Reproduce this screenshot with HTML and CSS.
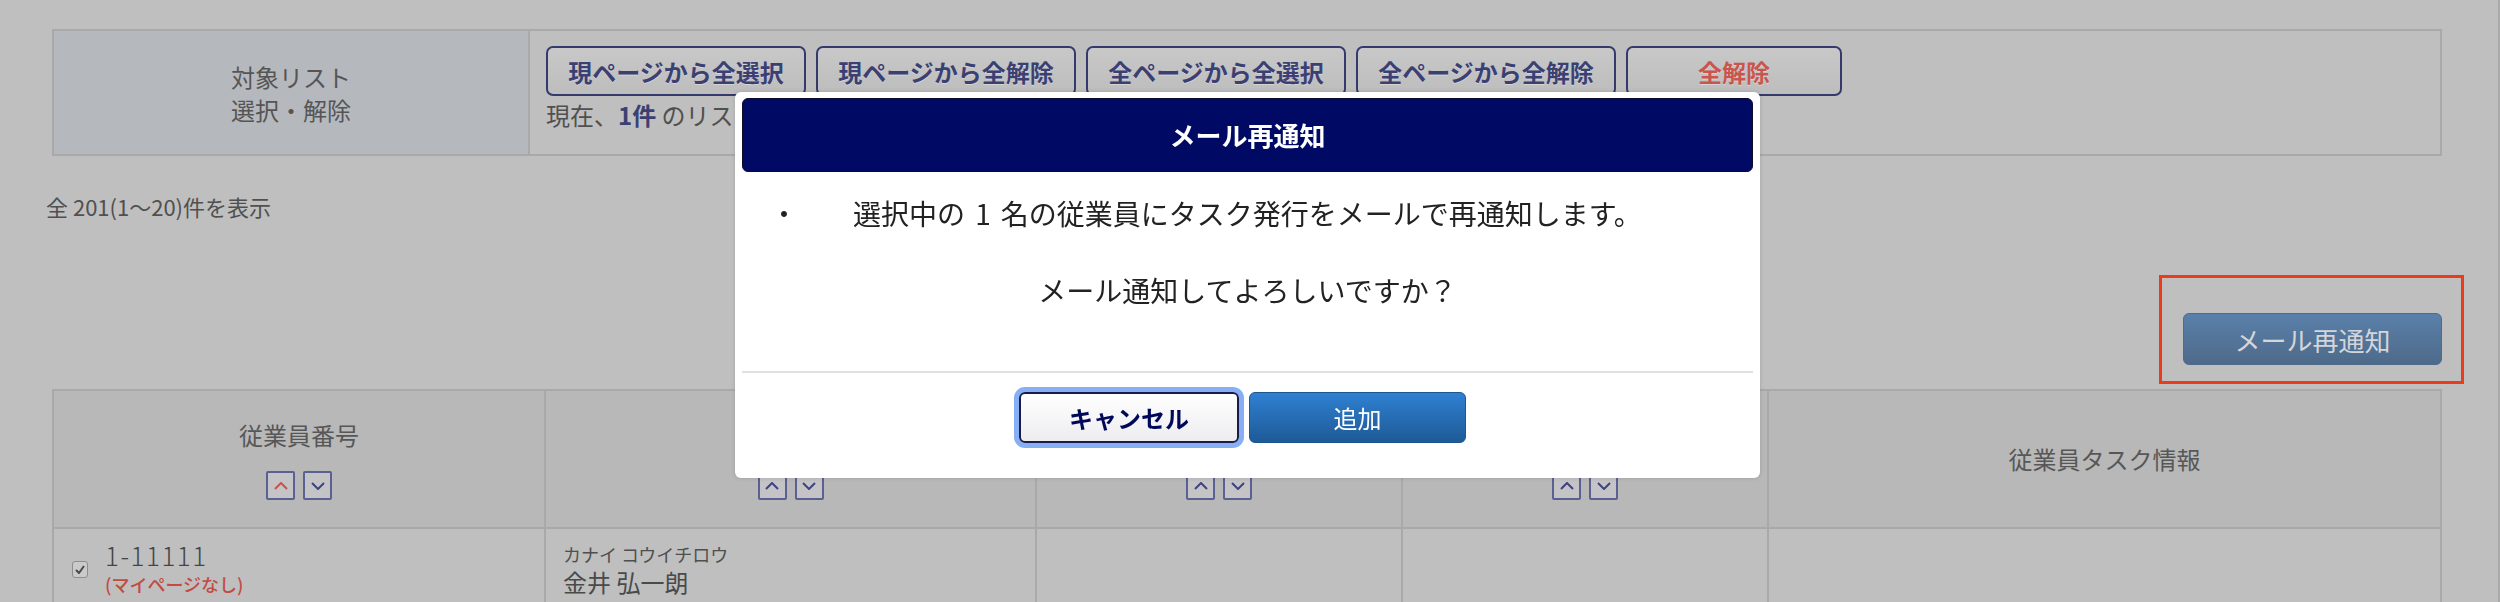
FILE: index.html
```html
<!DOCTYPE html>
<html lang="ja">
<head>
    <meta charset="UTF-8">
    <title>従業員タスク一覧 - メール再通知</title>
    <link rel="stylesheet" href="styles.css">
</head>
<body>

    <div class="page">

        <!-- 対象リスト 選択・解除 -->
        <table class="target-table">
            <tr>
                <th class="target-label">対象リスト<br>選択・解除</th>
                <td class="target-body">
                    <div class="select-buttons">
                        <button class="sel-btn">現ページから全選択</button>
                        <button class="sel-btn">現ページから全解除</button>
                        <button class="sel-btn">全ページから全選択</button>
                        <button class="sel-btn">全ページから全解除</button>
                        <button class="sel-btn sel-btn-clear">全解除</button>
                    </div>
                    <p class="selected-count">現在、<b>1件</b> のリストが選択されています。</p>
                </td>
            </tr>
        </table>

        <p class="result-count">全 201(1〜20)件を表示</p>

        <div class="actions">
            <button class="resend-btn">メール再通知</button>
            <div class="highlight"></div>
        </div>

        <!-- 従業員一覧 -->
        <table class="list-table">
            <tr>
                <th class="col-no">
                    <div class="th-title">従業員番号</div>
                    <div class="sort">
                        <span class="sort-btn active"><svg width="14" height="8" viewBox="0 0 14 8"><polyline points="1,7 7,1 13,7"/></svg></span>
                        <span class="sort-btn"><svg width="14" height="8" viewBox="0 0 14 8"><polyline points="1,1 7,7 13,1"/></svg></span>
                    </div>
                </th>
                <th class="col-name">
                    <div class="th-title">氏名</div>
                    <div class="sort">
                        <span class="sort-btn"><svg width="14" height="8" viewBox="0 0 14 8"><polyline points="1,7 7,1 13,7"/></svg></span>
                        <span class="sort-btn"><svg width="14" height="8" viewBox="0 0 14 8"><polyline points="1,1 7,7 13,1"/></svg></span>
                    </div>
                </th>
                <th class="col-mid">
                    <div class="th-title">所属</div>
                    <div class="sort">
                        <span class="sort-btn"><svg width="14" height="8" viewBox="0 0 14 8"><polyline points="1,7 7,1 13,7"/></svg></span>
                        <span class="sort-btn"><svg width="14" height="8" viewBox="0 0 14 8"><polyline points="1,1 7,7 13,1"/></svg></span>
                    </div>
                </th>
                <th class="col-mid">
                    <div class="th-title">入社日</div>
                    <div class="sort">
                        <span class="sort-btn"><svg width="14" height="8" viewBox="0 0 14 8"><polyline points="1,7 7,1 13,7"/></svg></span>
                        <span class="sort-btn"><svg width="14" height="8" viewBox="0 0 14 8"><polyline points="1,1 7,7 13,1"/></svg></span>
                    </div>
                </th>
                <th class="col-task">
                    <div class="th-title">従業員タスク情報</div>
                </th>
            </tr>
            <tr>
                <td>
                    <div class="emp-no">
                        <span class="check"><svg width="10" height="9" viewBox="0 0 10 9"><polyline points="1,5 4,8 9,1"/></svg></span>
                        <div>
                            <div class="emp-code">1-11111</div>
                            <div class="no-mypage">(マイページなし)</div>
                        </div>
                    </div>
                </td>
                <td>
                    <div class="kana">カナイ コウイチロウ</div>
                    <div class="name">金井 弘一朗</div>
                </td>
                <td></td>
                <td></td>
                <td></td>
            </tr>
        </table>
    </div>

    <!-- Modal -->
    <div class="modal">
        <div class="modal-header">メール再通知</div>
        <div class="modal-body">
            <div class="modal-item">
                <span class="bullet">・</span>
                <span class="item-text">選択中の<span class="num">1</span>名の従業員にタスク発行をメールで再通知します。</span>
            </div>
            <p class="modal-question">メール通知してよろしいですか？</p>
        </div>
        <div class="modal-footer">
            <button class="btn-cancel">キャンセル</button>
            <button class="btn-add">追加</button>
        </div>
    </div>

</body>
</html>
```

FILE: styles.css
```css
* {
    box-sizing: border-box;
}

body {
    margin: 0;
    background: #bfbfbf;
    font-family: "Noto Sans CJK JP", "Noto Sans", sans-serif;
    color: #4f4f4f;
}

button {
    font-family: inherit;
    cursor: pointer;
}

.page {
    min-height: 602px;
    padding: 29px 56px 0 52px;
    border-right: 2px solid #a9a9a9;
}

/* target list */
.target-table {
    width: 100%;
    border-collapse: collapse;
    border: 2px solid #a9a9a9;
}

.target-label {
    width: 476px;
    height: 125px;
    background: #b5b8bd;
    border-right: 2px solid #a9a9a9;
    font-size: 24px;
    font-weight: 400;
    line-height: 33px;
    color: #555;
}

.target-body {
    vertical-align: top;
    padding: 15px 16px 0;
}

.select-buttons {
    display: flex;
    gap: 10px;
}

.sel-btn {
    width: 260px;
    height: 50px;
    padding: 0;
    border: 2px solid #343a6c;
    border-radius: 7px;
    background: linear-gradient(#c8c8c8, #bdbdbd);
    font-size: 24px;
    font-weight: 700;
    color: #3b4073;
    text-shadow: 0 1px 0 rgba(255, 255, 255, 0.35);
}

.sel-btn-clear {
    width: 216px;
    color: #c9554d;
}

.selected-count {
    margin: 4px 0 0;
    font-size: 24px;
    line-height: 30px;
    color: #505050;
}

.selected-count b {
    color: #3b4073;
}

.result-count {
    margin: 35px 0 0 -6px;
    font-size: 22px;
    line-height: 30px;
    color: #505050;
}

/* resend */
.actions {
    position: relative;
    display: flex;
    justify-content: flex-end;
    margin-top: 92px;
}

.resend-btn {
    width: 259px;
    height: 52px;
    border: 1px solid #4f6b8c;
    border-radius: 6px;
    background: linear-gradient(#5a80aa, #4e6a8a);
    font-size: 26px;
    color: #d4d6da;
}

.highlight {
    position: absolute;
    right: -22px;
    top: -38px;
    width: 305px;
    height: 109px;
    border: 3px solid #ec3b1c;
}

/* employee list */
.list-table {
    width: 100%;
    margin-top: 24px;
    border-collapse: collapse;
    border: 2px solid #a9a9a9;
    table-layout: fixed;
}

.list-table th,
.list-table td {
    border: 2px solid #a9a9a9;
}

.list-table th {
    height: 138px;
    background: #b8b8b8;
    font-weight: 400;
    font-size: 24px;
    color: #575757;
}

.col-no { width: 492px; }
.col-name { width: 491px; }
.col-mid { width: 366px; }

.th-title {
    line-height: 34px;
}

.sort {
    display: flex;
    justify-content: center;
    gap: 8px;
    margin-top: 19px;
}

.sort-btn {
    display: flex;
    align-items: center;
    justify-content: center;
    width: 29px;
    height: 29px;
    border: 2px solid #5b6093;
    border-radius: 2px;
    background: #c4c4c6;
}

.sort-btn svg polyline {
    fill: none;
    stroke: #3d4282;
    stroke-width: 2;
}

.sort-btn.active svg polyline {
    stroke: #c8524e;
}

.list-table td {
    height: 90px;
    vertical-align: top;
    padding: 11px 17px 0;
}

.emp-no {
    display: flex;
    align-items: center;
    gap: 17px;
    padding-left: 1px;
}

.check {
    display: flex;
    align-items: center;
    justify-content: center;
    width: 16px;
    height: 17px;
    border: 1px solid #8e8e8e;
    border-radius: 3px;
    background: #cacaca;
}

.check svg polyline {
    fill: none;
    stroke: #4a4a4a;
    stroke-width: 2;
}

.emp-code {
    font-size: 26px;
    font-weight: 300;
    line-height: 30px;
    letter-spacing: 1.5px;
    color: #454545;
}

.no-mypage {
    font-size: 18px;
    font-weight: 500;
    line-height: 28px;
    color: #c24b45;
}

.kana {
    margin-top: 1px;
    font-size: 18px;
    line-height: 26px;
    color: #4f4f4f;
}

.name {
    font-size: 24px;
    line-height: 30px;
    color: #4a4a4a;
}

/* modal */
.modal {
    position: fixed;
    left: 735px;
    top: 92px;
    width: 1025px;
    height: 386px;
    padding: 6px 7px;
    background: #fff;
    border-radius: 6px;
    box-shadow: 0 0 4px rgba(0, 0, 0, 0.15);
}

.modal-header {
    height: 74px;
    line-height: 72px;
    background: #000a64;
    border: 1px solid #0b0b2a;
    border-radius: 6px;
    text-align: center;
    font-size: 26px;
    font-weight: 700;
    color: #fff;
}

.modal-body {
    padding: 21px 0 61px;
    border-bottom: 2px solid #e0e0e0;
    font-size: 28px;
    color: #222;
}

.modal-item {
    display: flex;
    padding: 0 56px 0 28px;
    line-height: 40px;
}

.bullet {
    width: 28px;
    text-align: center;
}

.item-text {
    flex: 1;
    text-align: center;
}

.num {
    margin: 0 10px;
}

.modal-question {
    margin: 37px 0 0;
    line-height: 40px;
    text-align: center;
}

.modal-footer {
    display: flex;
    justify-content: center;
    gap: 10px;
    padding: 19px 10px 0 0;
}

.btn-cancel {
    width: 220px;
    height: 51px;
    border: 2px solid #1b1b48;
    border-radius: 6px;
    background: linear-gradient(#ffffff, #ededf0);
    box-shadow: 0 0 0 5px #86aff5;
    font-size: 24px;
    font-weight: 700;
    color: #00085a;
}

.btn-add {
    width: 217px;
    height: 51px;
    border: 1px solid #1e5591;
    border-radius: 6px;
    background: linear-gradient(#2f80d2, #1e5a96);
    font-size: 24px;
    color: #fff;
}
```
